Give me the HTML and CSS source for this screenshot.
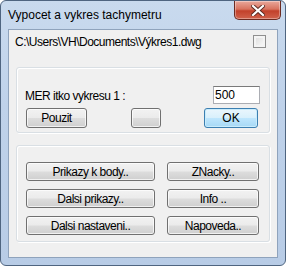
FILE: index.html
```html
<!DOCTYPE html>
<html lang="cs">
<head>
  <meta charset="utf-8" />
  <title>Vypocet a vykres tachymetru</title>
  <link rel="stylesheet" href="styles.css">
</head>
<body>
  <div class="window">
    <div class="titlebar">
      <span class="title">Vypocet a vykres tachymetru</span>
      <div class="close">
        <svg width="14" height="11" viewBox="0 0 14 11">
          <path d="M2 1 L12 10 M12 1 L2 10" stroke="#5b2a22" stroke-width="4" stroke-linecap="square" />
          <path d="M2 1 L12 10 M12 1 L2 10" stroke="#ffffff" stroke-width="2.2" stroke-linecap="square" />
        </svg>
      </div>
    </div>

    <div class="client">
      <div class="path-row">
        <span>C:\Users\VH\Documents\Výkres1.dwg</span>
        <span class="checkbox"></span>
      </div>

      <div class="group scale-group">
        <div class="scale-row">
          <span>MER itko vykresu 1 :</span>
          <div class="textbox">500</div>
        </div>
        <div class="action-row">
          <button class="btn btn-pouzit">Pouzit</button>
          <button class="btn btn-blank"></button>
          <button class="btn btn-default btn-ok">OK</button>
        </div>
      </div>

      <div class="group menu-group">
        <button class="btn">Prikazy k body..</button>
        <button class="btn">ZNacky..</button>
        <button class="btn">Dalsi prikazy..</button>
        <button class="btn">Info ..</button>
        <button class="btn">Dalsi nastaveni..</button>
        <button class="btn">Napoveda..</button>
      </div>
    </div>
  </div>
</body>
</html>
```

FILE: styles.css
```css
body {
  margin: 0;
  background-color: #fff;
  font-family: 'Liberation Sans', Arial, sans-serif;
  font-size: 12px;
  letter-spacing: -0.5px;
  color: #000;
}

.window {
  box-sizing: border-box;
  width: 286px;
  height: 266px;
  display: flex;
  flex-direction: column;
  border: 1px solid #4f6580;
  border-radius: 6px;
  background: linear-gradient(#c9daee, #bfd2ea 40%, #b8cce6);
}

.titlebar {
  height: 28px;
  display: flex;
  justify-content: space-between;
  align-items: flex-start;
  padding: 0 4px 0 7px;
}

.title {
  line-height: 28px;
  font-size: 12px;
  letter-spacing: 0;
}

.close {
  box-sizing: border-box;
  width: 47px;
  height: 19px;
  display: flex;
  align-items: center;
  justify-content: center;
  border: 1px solid #6b2b22;
  border-top: none;
  border-radius: 0 0 5px 5px;
  background: linear-gradient(#e9a89c, #d8735f 45%, #c2412b 55%, #d0624c);
  box-shadow: inset 0 0 0 1px rgba(255, 255, 255, 0.35);
}

.client {
  box-sizing: border-box;
  flex: 1;
  margin: 0 7px 7px 7px;
  border: 1px solid #8fa3bc;
  background-color: #f0f0f0;
  display: flex;
  flex-direction: column;
}

.path-row {
  display: flex;
  justify-content: space-between;
  align-items: center;
  height: 13px;
  margin-top: 5px;
  padding: 0 11px 0 6px;
}

.checkbox {
  box-sizing: border-box;
  width: 13px;
  height: 13px;
  border: 1px solid #8f8f8f;
  background: linear-gradient(135deg, #dcdcdc, #fbfbfb);
  box-shadow: inset 0 0 0 2px #f4f4f4;
}

.group {
  box-sizing: border-box;
  margin: 0 7px;
  border: 1px solid #d9dfe4;
  border-radius: 3px;
  box-shadow: inset 1px 1px 0 #fff, 1px 1px 0 #fff;
}

.scale-group {
  margin-top: 19px;
  height: 66px;
  padding: 18px 9px 0 8px;
}

.scale-row {
  display: flex;
  justify-content: space-between;
  align-items: center;
  height: 18px;
}

.scale-row span {
  margin-top: 2px;
}

.textbox {
  box-sizing: border-box;
  width: 47px;
  height: 18px;
  padding-left: 1px;
  line-height: 16px;
  font-size: 12px;
  letter-spacing: 0;
  background: #fff;
  border: 1px solid #abadb3;
  border-top-color: #7a7a7a;
}

.action-row {
  display: flex;
  margin-top: 4px;
  padding-left: 1px;
}

.btn {
  box-sizing: border-box;
  height: 20px;
  padding: 0;
  font-family: 'Liberation Sans', Arial, sans-serif;
  font-size: 12px;
  letter-spacing: -0.5px;
  color: #000;
  border: 1px solid #707070;
  border-radius: 3px;
  background: linear-gradient(#f2f2f2, #ebebeb 48%, #dddddd 52%, #cfcfcf);
  box-shadow: inset 0 0 0 1px rgba(255, 255, 255, 0.7);
}

.btn-pouzit {
  width: 61px;
}

.btn-blank {
  width: 30px;
  margin-left: 44px;
}

.btn-ok {
  width: 54px;
  margin-left: 43px;
  letter-spacing: 0;
}

.btn-default {
  border-color: #3c7fb1;
  background: linear-gradient(#eaf6fd, #d9f0fc 48%, #bee6fd 52%, #a7d9f5);
  box-shadow: inset 0 0 0 1px #c9ecfc;
}

.menu-group {
  margin-top: 12px;
  height: 97px;
  padding: 16px 9px 0 9px;
  display: grid;
  grid-template-columns: 129px 92px;
  grid-auto-rows: 19px;
  column-gap: 12px;
  row-gap: 8px;
  align-content: start;
}

.menu-group .btn {
  height: 19px;
}
```
